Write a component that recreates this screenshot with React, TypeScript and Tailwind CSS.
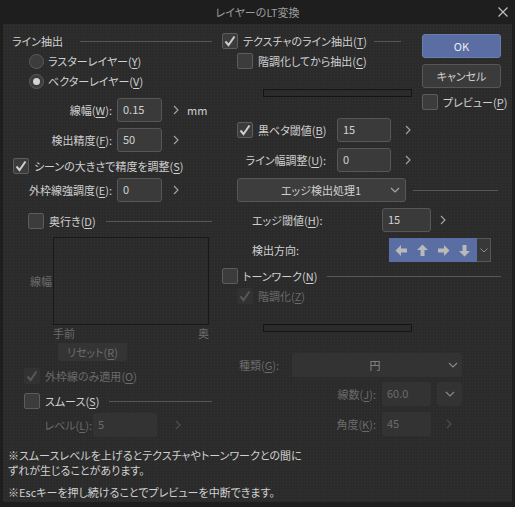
import React from 'react';

// mnemonic label: 線幅(W) with the access key underlined
const Mn = ({ t, k, colon }: { t: string; k: string; colon?: boolean }) => (
  <>
    {t}(<u className="underline-offset-2">{k}</u>){colon ? ':' : ''}
  </>
);

const Check = ({ on, dim }: { on?: boolean; dim?: boolean }) => (
  <span
    className={`flex h-[16px] w-[16px] shrink-0 items-center justify-center rounded-[2px] ${
      dim ? 'bg-[#323232]' : 'border border-[#5c5c5c] bg-[#3c3c3c]'
    }`}
  >
    {on && (
      <svg width="12" height="12" viewBox="0 0 12 12">
        <path d="M1.5 6.5 L4.5 10 L10.5 1.5" fill="none" stroke={dim ? '#585858' : '#cfcfcf'} strokeWidth="2" />
      </svg>
    )}
  </span>
);

const CheckRow = ({
  on,
  dim,
  className = '',
  children,
}: {
  on?: boolean;
  dim?: boolean;
  className?: string;
  children: React.ReactNode;
}) => (
  <div className={`flex h-[16px] items-center gap-[5px] ${className}`}>
    <Check on={on} dim={dim} />
    <span className={`whitespace-nowrap ${dim ? 'text-[#6a6a6a]' : ''}`}>{children}</span>
  </div>
);

const Radio = ({ on, className = '', children }: { on?: boolean; className?: string; children: React.ReactNode }) => (
  <div className={`flex h-[16px] items-center gap-[4px] ${className}`}>
    <span className="flex h-[15px] w-[15px] items-center justify-center rounded-full border border-[#5c5c5c] bg-[#3c3c3c]">
      {on && <span className="h-[7px] w-[7px] rounded-full bg-[#d4d4d4]" />}
    </span>
    <span className="whitespace-nowrap">{children}</span>
  </div>
);

const Num = ({ v, className = '', dim }: { v: string; className?: string; dim?: boolean }) => (
  <div
    className={`flex h-[24px] items-center rounded-[3px] pb-[3px] pl-[5px] ${className} ${
      dim ? 'bg-[#333333] text-[#6c6c6c]' : 'border border-[#575757] bg-[#3a3a3a] text-[#d2d2d2]'
    }`}
  >
    {v}
  </div>
);

const More = ({ dim, className = '' }: { dim?: boolean; className?: string }) => (
  <svg className={className} width="6" height="10" viewBox="0 0 6 10">
    <path d="M1 1 L5 5 L1 9" fill="none" stroke={dim ? '#4e4e4e' : '#a6a6a6'} strokeWidth="1.1" />
  </svg>
);

const Down = ({ dim }: { dim?: boolean }) => (
  <svg width="10" height="6" viewBox="0 0 10 6">
    <path d="M1 1 L5 5 L9 1" fill="none" stroke={dim ? '#8a8a8a' : '#a8a8a8'} strokeWidth="1.1" />
  </svg>
);

const Rule = ({ className = '' }: { className?: string }) => <div className={`h-px bg-[#565656] ${className}`} />;

const Slider = ({ className = '' }: { className?: string }) => (
  <div className={`h-[8px] w-[149px] border border-[#141414] bg-[#2b2b2b] ${className}`} />
);

// block arrow pointing left, rotated for the other directions
const Dir = ({ rot }: { rot: string }) => (
  <svg className={rot} width="13" height="13" viewBox="0 0 13 13">
    <path d="M0.5 6.5 L6 1 L6 4.5 L12 4.5 L12 8.5 L6 8.5 L6 12 Z" fill="#b9b9b9" />
  </svg>
);

function LeftPanel() {
  return (
    <div className="flex w-[215px] shrink-0 flex-col pl-[9px] pr-[6px] pt-[9px]">
      <div className="flex h-[16px] items-center">
        <span>ライン抽出</span>
        <Rule className="ml-[17px] flex-1" />
      </div>
      <Radio className="ml-[17px] mt-[4px]">
        <Mn t="ラスターレイヤー" k="Y" />
      </Radio>
      <Radio on className="ml-[17px] mt-[4px]">
        <Mn t="ベクターレイヤー" k="V" />
      </Radio>

      <div className="mt-[9px] flex h-[24px] items-center">
        <span className="w-[100px] text-right">
          <Mn t="線幅" k="W" colon />
        </span>
        <Num v="0.15" className="ml-[5px] w-[45px]" />
        <More className="ml-[11px]" />
        <span className="ml-[8px]">mm</span>
      </div>
      <div className="mt-[6px] flex h-[24px] items-center">
        <span className="w-[100px] text-right">
          <Mn t="検出精度" k="F" colon />
        </span>
        <Num v="50" className="ml-[5px] w-[45px]" />
        <More className="ml-[11px]" />
      </div>

      <CheckRow on className="ml-[1px] mt-[6px]">
        <Mn t="シーンの大きさで精度を調整" k="S" />
      </CheckRow>
      <div className="mt-[4px] flex h-[24px] items-center">
        <span className="w-[100px] whitespace-nowrap text-right">
          <Mn t="外枠線強調度" k="E" colon />
        </span>
        <Num v="0" className="ml-[5px] w-[45px]" />
        <More className="ml-[11px]" />
      </div>

      <div className="ml-[16px] mt-[11px] flex h-[16px] items-center">
        <CheckRow>
          <Mn t="奥行き" k="D" />
        </CheckRow>
        <Rule className="ml-[10px] flex-1" />
      </div>

      <div className="mt-[8px] flex h-[88px] items-center">
        <span className="w-[41px] pr-[1px] text-right text-[#6c6c6c]">線幅</span>
        <div className="h-full w-[156px] border border-[#181818]" />
      </div>
      <div className="ml-[41px] mt-[1px] flex h-[14px] w-[156px] items-center justify-between text-[#6c6c6c]">
        <span>手前</span>
        <span>奥</span>
      </div>
      <div className="ml-[46px] mt-[3px] flex h-[18px] w-[69px] items-center justify-center rounded-[2px] bg-[#343434] text-[#6c6c6c]">
        <Mn t="リセット" k="R" />
      </div>

      <CheckRow on dim className="ml-[12px] mt-[7px]">
        <Mn t="外枠線のみ適用" k="O" />
      </CheckRow>
      <div className="ml-[12px] mt-[9px] flex h-[16px] items-center">
        <CheckRow>
          <Mn t="スムース" k="S" />
        </CheckRow>
        <Rule className="ml-[10px] flex-1" />
      </div>
      <div className="mt-[4px] flex h-[24px] items-center">
        <span className="w-[80px] text-right text-[#6a6a6a]">
          <Mn t="レベル" k="L" colon />
        </span>
        <Num v="5" dim className="ml-[1px] w-[64px]" />
        <More dim className="ml-[18px]" />
      </div>
    </div>
  );
}

function RightPanel() {
  return (
    <div className="flex flex-1 flex-col pl-[4px] pr-[17px] pt-[9px]">
      <div className="flex">
        <div className="flex w-[190px] flex-col">
          <div className="flex h-[16px] items-center">
            <CheckRow on>
              <Mn t="テクスチャのライン抽出" k="T" />
            </CheckRow>
            <Rule className="ml-[7px] mr-[11px] flex-1" />
          </div>
          <CheckRow className="ml-[15px] mt-[4px]">
            <Mn t="階調化してから抽出" k="C" />
          </CheckRow>
          <Slider className="ml-[41px] mt-[20px]" />
        </div>
        <div className="ml-[10px] flex w-[79px] flex-col">
          <div className="mt-[1px] flex h-[24px] items-center justify-center rounded-[3px] border border-[#6a7db0] bg-[#5a6ea3] text-[#ececec]">
            OK
          </div>
          <div className="mt-[6px] flex h-[24px] items-center justify-center rounded-[3px] border border-[#575757] bg-[#3b3b3b]">
            キャンセル
          </div>
          <CheckRow className="mt-[6px]">
            <Mn t="プレビュー" k="P" />
          </CheckRow>
        </div>
      </div>

      <div className="mt-[8px] flex h-[24px] items-center">
        <CheckRow on className="ml-[15px] w-[100px]">
          <Mn t="黒ベタ閾値" k="B" />
        </CheckRow>
        <Num v="15" className="w-[54px]" />
        <More className="ml-[14px]" />
      </div>
      <div className="mt-[6px] flex h-[24px] items-center">
        <span className="w-[104px] whitespace-nowrap text-right">
          <Mn t="ライン幅調整" k="U" colon />
        </span>
        <Num v="0" className="ml-[11px] w-[54px]" />
        <More className="ml-[14px]" />
      </div>

      <div className="mt-[6px] flex h-[24px] items-center">
        <div className="ml-[15px] flex h-full w-[169px] items-center rounded-[3px] border border-[#575757] bg-[#3d3d3d]">
          <span className="flex-1 pl-[14px] text-center">エッジ検出処理1</span>
          <span className="mr-[5px] flex w-[10px]">
            <Down />
          </span>
        </div>
        <Rule className="ml-[7px] mr-[3px] flex-1" />
      </div>

      <div className="mt-[6px] flex h-[24px] items-center">
        <span className="ml-[30px] w-[130px]">
          <Mn t="エッジ閾値" k="H" colon />
        </span>
        <Num v="15" className="w-[49px]" />
        <More className="ml-[9px]" />
      </div>
      <div className="mt-[6px] flex h-[24px] items-center">
        <span className="ml-[30px] w-[137px]">検出方向:</span>
        <div className="flex h-full w-[88px] items-center justify-around bg-[#5a6ea3] px-[2px]">
          <Dir rot="" />
          <Dir rot="rotate-90" />
          <Dir rot="rotate-180" />
          <Dir rot="-rotate-90" />
        </div>
        <div className="flex h-full w-[14px] items-center justify-center border border-l-0 border-[#575757] bg-[#383838]">
          <svg width="8" height="5" viewBox="0 0 8 5">
            <path d="M0.5 0.5 L4 4 L7.5 0.5" fill="none" stroke="#8c8c8c" strokeWidth="1" />
          </svg>
        </div>
      </div>

      <div className="mt-[6px] flex h-[16px] items-center">
        <CheckRow>
          <Mn t="トーンワーク" k="N" />
        </CheckRow>
        <Rule className="ml-[10px] flex-1" />
      </div>
      <CheckRow on dim className="ml-[15px] mt-[4px]">
        <Mn t="階調化" k="Z" />
      </CheckRow>
      <Slider className="ml-[41px] mt-[20px]" />

      <div className="mt-[21px] flex h-[24px] items-center">
        <span className="w-[57px] whitespace-nowrap text-right text-[#6a6a6a]">
          <Mn t="種類" k="G" colon />
        </span>
        <div className="ml-[13px] flex h-full w-[170px] items-center rounded-[3px] bg-[#333333] text-[#8a8a8a]">
          <span className="flex-1 pl-[10px] text-center">円</span>
          <span className="mr-[4px] flex w-[10px]">
            <Down dim />
          </span>
        </div>
      </div>
      <div className="mt-[5px] flex h-[24px] items-center">
        <span className="w-[154px] text-right text-[#6a6a6a]">
          <Mn t="線数" k="J" colon />
        </span>
        <Num v="60.0" dim className="ml-[6px] w-[49px]" />
        <div className="ml-[6px] flex h-full w-[25px] items-center justify-center rounded-[3px] bg-[#333333]">
          <Down dim />
        </div>
      </div>
      <div className="mt-[6px] flex h-[24px] items-center">
        <span className="w-[154px] text-right text-[#6a6a6a]">
          <Mn t="角度" k="K" colon />
        </span>
        <Num v="45" dim className="ml-[6px] w-[49px]" />
        <More dim className="ml-[15px]" />
      </div>
    </div>
  );
}

export default function App() {
  return (
    <div className="flex h-[507px] w-[515px] flex-col bg-[#1e1e1e] font-['Noto_Sans_CJK_JP','Noto_Sans',sans-serif] text-[11px] leading-[14px] text-[#d0d0d0] [font-feature-settings:'palt']">
      <div className="relative flex h-[24px] shrink-0 items-center justify-center text-[#9c9c9c]">
        <span>レイヤーのLT変換</span>
        <svg className="absolute right-[7px] top-[7px]" width="10" height="10" viewBox="0 0 10 10">
          <path d="M0.5 0.5 L9.5 9.5 M9.5 0.5 L0.5 9.5" stroke="#c4c4c4" strokeWidth="1.1" />
        </svg>
      </div>

      <div className="mx-[3px] mb-[5px] flex flex-1 flex-col bg-[#2b2b2b] bg-[radial-gradient(rgba(255,255,255,0.045)_0.6px,transparent_0.8px)] bg-[length:3px_3px]">
        <div className="flex h-[414px] shrink-0">
          <LeftPanel />
          <div className="mt-[16px] h-[398px] w-px bg-[#545454]" />
          <RightPanel />
        </div>

        <div className="mt-[10px] pl-[5px] leading-[15px]">
          <p>※スムースレベルを上げるとテクスチャやトーンワークとの間に</p>
          <p>ずれが生じることがあります。</p>
          <p className="mt-[7px]">※Escキーを押し続けることでプレビューを中断できます。</p>
        </div>
      </div>
    </div>
  );
}
